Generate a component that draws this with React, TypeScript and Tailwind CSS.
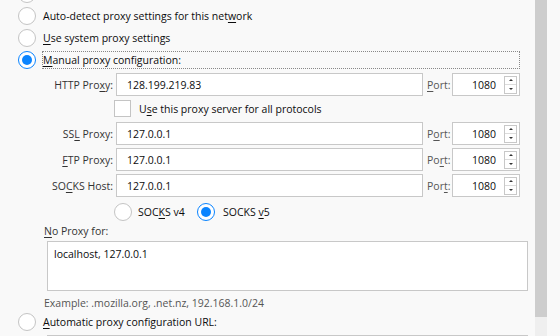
import React from "react";

const font = { fontFamily: '"Open Sans", "Noto Sans", sans-serif' };

function Radio({ checked = false }: { checked?: boolean }) {
  return (
    <div
      className={
        "w-[18px] h-[18px] rounded-full border bg-white flex items-center justify-center shrink-0 " +
        (checked ? "border-[#0a84ff]" : "border-[#c4c4c4]")
      }
    >
      {checked && <div className="w-[10px] h-[10px] rounded-full bg-[#0a84ff]" />}
    </div>
  );
}

function K({ children }: { children: React.ReactNode }) {
  return <span className="underline underline-offset-[2px] decoration-[1px]">{children}</span>;
}

function Spin() {
  return (
    <div className="ml-[8px] mr-[2px] w-[13px] h-[18px] border border-[#c8c8c8] flex flex-col shrink-0">
      <div className="flex-1 flex items-center justify-center border-b border-[#dcdcdc]">
        <div className="w-0 h-0 border-l-[2px] border-r-[2px] border-b-[2px] border-l-transparent border-r-transparent border-b-[#333]" />
      </div>
      <div className="flex-1 flex items-center justify-center">
        <div className="w-0 h-0 border-l-[2px] border-r-[2px] border-t-[2px] border-l-transparent border-r-transparent border-t-[#333]" />
      </div>
    </div>
  );
}

function ProxyRow({
  label,
  value,
  port,
  className = "",
}: {
  label: React.ReactNode;
  value: string;
  port: React.ReactNode;
  className?: string;
}) {
  return (
    <div className={"flex items-center h-[23px] " + className}>
      <div className="w-[113px] text-right text-[#333]">{label}</div>
      <div className="ml-[3px] w-[307px] h-[23px] border border-[#c8c8c8] bg-white flex items-center pl-[10px] text-[#0c0c0d]">
        {value}
      </div>
      <div className="ml-[4px] w-[25px] text-[#555]">{port}</div>
      <div className="w-[68px] h-[23px] border border-[#c8c8c8] bg-white flex items-center justify-end text-[#0c0c0d]">
        <span>1080</span>
        <Spin />
      </div>
    </div>
  );
}

export default function App() {
  return (
    <div
      className="w-[560px] h-[336px] bg-[#f9f9f9] overflow-hidden flex text-[10.5px] leading-[16px] text-[#0c0c0d]"
      style={font}
    >
      <div className="w-[535px] flex flex-col shrink-0 *:shrink-0">
        <div className="mt-[-17px] h-[22px] flex items-center pl-[18px]">
          <Radio />
        </div>
        <div className="h-[22px] flex items-center pl-[18px]">
          <Radio />
          <span className="ml-[7px]">
            Auto-detect proxy settings for this net<K>w</K>ork
          </span>
        </div>
        <div className="h-[22px] flex items-center pl-[18px]">
          <Radio />
          <span className="ml-[7px]">
            <K>U</K>se system proxy settings
          </span>
        </div>
        <div className="h-[22px] flex items-center pl-[18px] pr-[15px]">
          <Radio checked />
          <div className="ml-[6px] flex-1 h-[18px] border border-dotted border-[#888] flex items-center">
            <K>M</K>anual proxy configuration:
          </div>
        </div>

        <ProxyRow
          className="mt-[2px]"
          label={<>HTTP Pro<K>x</K>y:</>}
          value="128.199.219.83"
          port={<><K>P</K>ort:</>}
        />

        <div className="mt-[4px] h-[17px] flex items-center pl-[114px]">
          <div className="w-[17px] h-[17px] border border-[#c4c4c4] bg-white shrink-0" />
          <span className="ml-[8px]">
            U<K>s</K>e this proxy server for all protocols
          </span>
        </div>

        <ProxyRow
          className="mt-[5px]"
          label={<>SS<K>L</K> Proxy:</>}
          value="127.0.0.1"
          port={<>P<K>o</K>rt:</>}
        />
        <ProxyRow
          className="mt-[3px]"
          label={<><K>F</K>TP Proxy:</>}
          value="127.0.0.1"
          port={<>Po<K>r</K>t:</>}
        />
        <ProxyRow
          className="mt-[3px]"
          label={<>SO<K>C</K>KS Host:</>}
          value="127.0.0.1"
          port={<>Por<K>t</K>:</>}
        />

        <div className="mt-[6px] h-[18px] flex items-center pl-[114px]">
          <div className="w-[83px] flex items-center">
            <Radio />
            <span className="ml-[6px]">
              SOC<K>K</K>S v4
            </span>
          </div>
          <Radio checked />
          <span className="ml-[8px]">
            SOCKS <K>v</K>5
          </span>
        </div>

        <div className="mt-[2px] h-[16px] pl-[44px] text-[#333]">
          <K>N</K>o Proxy for:
        </div>
        <div className="mt-[2px] ml-[47px] w-[481px] h-[50px] border border-[#c8c8c8] bg-white px-[6px] pt-[4px]">
          localhost, 127.0.0.1
        </div>
        <div className="mt-[4px] h-[16px] pl-[44px] text-[#555]">
          Example: .mozilla.org, .net.nz, 192.168.1.0/24
        </div>
        <div className="h-[22px] flex items-center pl-[18px]">
          <Radio />
          <span className="ml-[7px]">
            <K>A</K>utomatic proxy configuration URL:
          </span>
        </div>
        <div className="mt-[2px] ml-[47px] w-[481px] flex">
          <div className="w-[421px] h-[23px] border border-[#c8c8c8] bg-white" />
          <div className="w-[60px] h-[23px] border border-[#c8c8c8] bg-[#ececec]" />
        </div>
      </div>
      <div className="w-[12px] flex flex-col shrink-0">
        <div className="h-[317px] bg-[#cdcdcd]" />
        <div className="flex-1 bg-[#efefef]" />
      </div>
      <div className="flex-1" />
    </div>
  );
}
